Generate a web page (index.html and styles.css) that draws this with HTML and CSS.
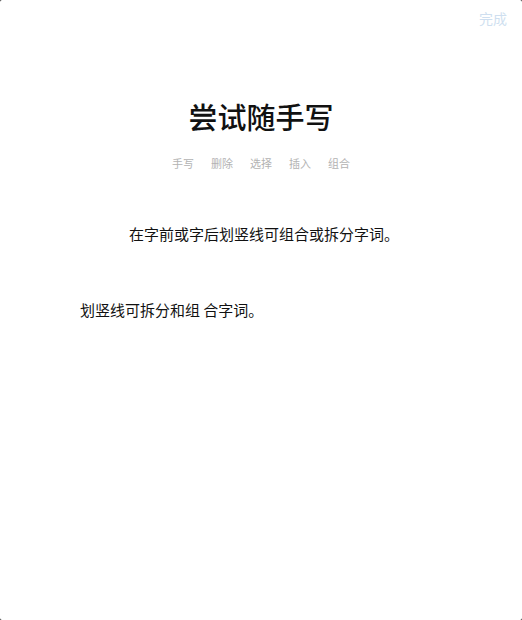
FILE: index.html
```html
<!DOCTYPE html>
<html lang="zh-CN">
<head>
<meta charset="utf-8">
<title>尝试随手写</title>
<link rel="stylesheet" href="styles.css">
</head>
<body>
<div class="sheet">
  <div class="topbar"><span class="done">完成</span></div>
  <h1 class="title">尝试随手写</h1>
  <nav class="tabs">
    <span class="tab">手写</span>
    <span class="tab">删除</span>
    <span class="tab">选择</span>
    <span class="tab">插入</span>
    <span class="tab">组合</span>
  </nav>
  <p class="hint">在字前或字后划竖线可组合或拆分字词。</p>
  <p class="sample">划竖线可拆分和组 合字词。</p>
</div>
</body>
</html>
```
FILE: styles.css
```css
html, body {
  margin: 0;
  padding: 0;
  background: #222;
}
body {
  font-family: "Noto Sans CJK SC", "Noto Sans", sans-serif;
}
.sheet {
  width: 522px;
  height: 620px;
  background: #fff;
  border-radius: 2px;
  box-sizing: border-box;
  overflow: hidden;
}
.topbar {
  display: flex;
  justify-content: flex-end;
  padding: 8px 15px 0 0;
  height: 22px;
}
.done {
  font-size: 14px;
  line-height: 20px;
  color: #cfdff0;
}
.title {
  margin: 68px 0 0;
  text-align: center;
  font-size: 29px;
  line-height: 36px;
  font-weight: 500;
  color: #111;
}
.tabs {
  display: flex;
  justify-content: center;
  gap: 17px;
  margin-top: 21px;
}
.tab {
  font-size: 11px;
  line-height: 16px;
  color: #b3b3b3;
}
.hint {
  margin: 53px 0 0 129px;
  font-size: 15px;
  line-height: 20px;
  color: #111;
}
.sample {
  margin: 56px 0 0 80px;
  font-size: 15px;
  line-height: 20px;
  color: #111;
}
```
